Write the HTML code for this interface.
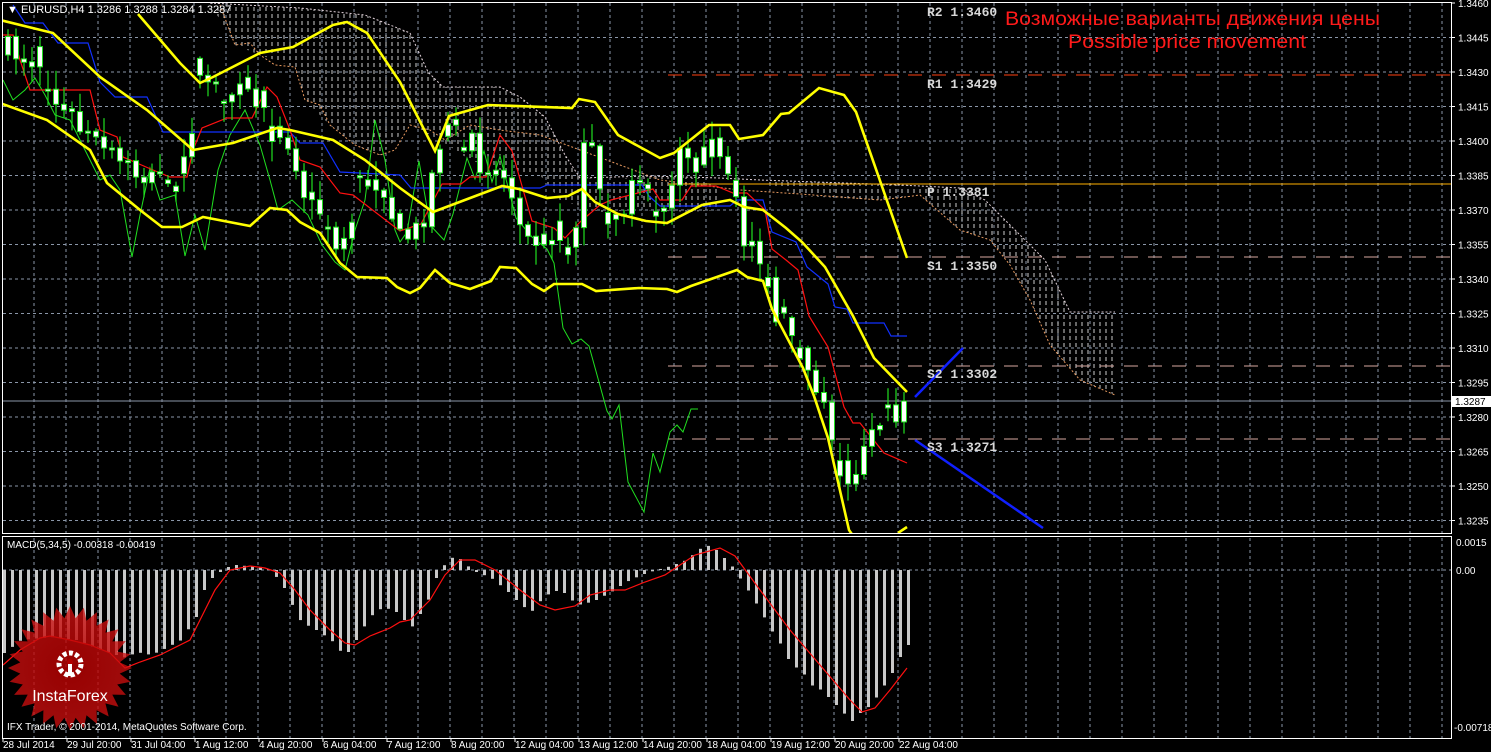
<!DOCTYPE html>
<html><head><meta charset="utf-8"><style>
html,body{margin:0;padding:0;background:#000;width:1491px;height:752px;overflow:hidden}
svg{display:block}
text{font-family:"Liberation Sans","DejaVu Sans",sans-serif}
text.m{font-family:"Liberation Mono","DejaVu Sans Mono",monospace}
</style></head><body>
<svg id="s" width="1491" height="752" viewBox="0 0 1491 752" xmlns="http://www.w3.org/2000/svg">
<defs>
<pattern id="cl" width="6" height="7" patternUnits="userSpaceOnUse"><line x1="2" y1="0" x2="2" y2="4" stroke="#f0f0f0" stroke-width="1"/></pattern>
<clipPath id="mc"><rect x="3" y="3" width="1448" height="530"/></clipPath>
<clipPath id="sc"><rect x="3" y="538" width="1448" height="200"/></clipPath>
<radialGradient id="rg" cx="50%" cy="50%" r="50%"><stop offset="0" stop-color="#b00000" stop-opacity="0.95"/><stop offset="1" stop-color="#d01010" stop-opacity="0.85"/></radialGradient>
</defs>
<rect width="1491" height="752" fill="#000"/>
<g id="grid" stroke="#8a96a8" stroke-width="1" stroke-dasharray="3,3"></g>
<g clip-path="url(#mc)">
<polygon fill="url(#cl)" opacity="0.85" points="210,3 300,8 365,15 410,33 428,72 443,87 500,87 520,97 545,117 565,155 580,178 610,180 650,176 700,178 720,190 720,210 690,212 640,210 600,212 560,200 540,175 500,170 470,160 440,140 410,125 380,155 355,145 330,125 305,100 295,67 260,55 235,45"/>
<polygon fill="url(#cl)" opacity="0.85" points="760,180 900,185 960,188 985,200 1020,235 1045,260 1070,312 1115,312 1115,395 1080,380 1050,345 1030,300 1010,265 990,240 960,230 920,195 880,200 800,196"/>
<polyline fill="none" stroke="#e89a60" stroke-width="1" stroke-dasharray="2,2" points="220,5 235,45 250,43 260,55 275,65 295,67 305,100 320,105 330,125 355,145 380,155 395,150 410,125 430,130 445,140 470,125 500,130 540,135 580,150 620,165 660,180 700,185 740,190 800,194 880,200 905,197 920,195 960,230 990,240 1010,265 1030,300 1050,345 1080,380 1115,395"/>
<polyline fill="none" stroke="#e0d0d8" stroke-width="1" stroke-dasharray="2,2" points="210,3 300,8 365,15 410,33 428,72 443,87 500,87 520,97 545,117 565,155 580,178 650,176 720,178 760,180 900,185 960,188 985,200 1020,235 1045,260 1070,312 1115,312"/>
<line x1="668" y1="75" x2="1451" y2="75" stroke="#ff4010" stroke-width="1" stroke-dasharray="14,10"/>
<line x1="668" y1="184" x2="1451" y2="184" stroke="#ffb000" stroke-width="1"/>
<line x1="668" y1="257" x2="1451" y2="257" stroke="#d8a8a0" stroke-width="1" stroke-dasharray="14,10"/>
<line x1="668" y1="366" x2="1451" y2="366" stroke="#d8a8a0" stroke-width="1" stroke-dasharray="14,10"/>
<line x1="668" y1="439" x2="1451" y2="439" stroke="#d8a8a0" stroke-width="1" stroke-dasharray="14,10"/>
<line x1="3" y1="401" x2="1451" y2="401" stroke="#8a96a8" stroke-width="1"/>
<polyline fill="none" stroke="#20e020" stroke-width="1" points="3,80 13,100 25,90 35,78 45,95 55,115 70,120 85,150 100,180 110,175 120,190 132,257 140,215 150,168 160,200 175,195 185,256 195,215 205,250 218,170 230,135 245,110 260,145 270,180 278,210 292,200 308,215 322,245 335,262 345,270 355,230 365,200 375,120 385,160 395,230 400,242 407,232 419,161 430,225 444,240 453,214 467,158 475,179 484,151 492,182 500,156 516,218 532,237 547,249 554,263 563,328 572,344 581,339 589,346 607,411 612,419 619,405 628,482 644,512 653,453 660,472 670,432 677,425 683,432 691,409 698,409"/>
<polyline fill="none" stroke="#1030ff" stroke-width="1.2" points="13,5 25,23 43,23 58,43 88,43 100,82 115,97 147,97 163,132 290,132 300,143 323,143 340,172 400,175 411,188 540,188 547,185 642,185 649,196 660,206 730,206 737,200 763,200 772,232 796,242 807,267 828,284 835,307 847,309 853,323 884,323 891,336 907,336"/>
<polyline fill="none" stroke="#ff1010" stroke-width="1.2" points="3,35 13,35 20,60 30,90 60,90 90,90 100,130 117,137 123,157 153,170 170,177 187,177 193,150 202,128 227,118 252,118 267,87 277,97 290,130 300,160 320,167 340,193 353,195 400,231 421,224 442,184 461,184 470,177 486,177 500,135 512,151 532,221 554,228 565,238 580,222 600,205 611,200 653,189 660,200 682,200 691,186 716,186 733,193 747,193 765,210 772,249 786,260 798,270 809,316 828,347 844,407 853,423 860,423 884,453 907,463"/>
<g id="candles"></g>
<g fill="none" stroke="#ffff00" stroke-width="2.6">
<polyline points="138,14 180,63 200,83 213,77 260,53 293,47 333,25 347,22 367,33 400,82 435,151 449,116 488,105 572,108 579,99 595,102 618,135 660,158 674,153 709,125 730,125 739,139 763,135 781,114 789,113 819,88 844,95 856,112 907,258"/>
<polyline points="0,20 53,33 100,77 147,110 193,150 233,143 277,128 290,130 333,140 365,160 400,188 433,212 502,186 519,189 547,198 568,196 582,189 595,202 618,214 646,221 667,223 702,205 730,200 744,207 763,210 786,228 802,242 825,267 853,316 874,358 907,392"/>
<polyline points="0,103 47,120 90,150 107,183 140,210 162,227 182,227 203,217 250,226 270,208 287,210 300,222 320,233 340,263 357,277 387,278 397,287 410,293 420,288 435,270 450,283 470,289 491,281 500,267 516,268 532,284 544,291 554,284 582,284 596,291 639,288 667,289 677,292 691,286 737,270 747,277 763,281 772,309 803,368 814,396 828,438 849,530 856,540"/>
<polyline points="898,533 907,527"/>
</g>
<line x1="915" y1="397" x2="963" y2="348" stroke="#1020ff" stroke-width="2.5"/>
<line x1="915" y1="440" x2="1043" y2="528" stroke="#1020ff" stroke-width="2.5"/>
<g font-size="13" font-weight="bold" fill="#d8d8d8">
<text class="m" x="927" y="16">R2 1.3460</text>
<text class="m" x="927" y="88">R1 1.3429</text>
<text class="m" x="927" y="196">P 1.3381</text>
<text class="m" x="927" y="270">S1 1.3350</text>
<text class="m" x="927" y="378">S2 1.3302</text>
<text class="m" x="927" y="451">S3 1.3271</text>
</g>
</g>
<text x="1005" y="25" fill="#ff1a1a" font-size="19" textLength="375" lengthAdjust="spacingAndGlyphs">Возможные варианты движения цены</text>
<text x="1068" y="48" fill="#ff1a1a" font-size="19" textLength="238" lengthAdjust="spacingAndGlyphs">Possible price movement</text>
<text x="7" y="13" fill="#fff" font-size="11">▼ EURUSD,H4  1.3286 1.3288 1.3284 1.3287</text>
<line x1="3" y1="570" x2="1451" y2="570" stroke="#8a96a8" stroke-dasharray="3,3"/>
<g id="hist" clip-path="url(#sc)"></g>
<g transform="translate(70,668)">
<polygon id="star" fill="url(#rg)" opacity="0.9"/>
<g fill="#fff" transform="translate(0,-4)">
<circle cx="0" cy="0" r="11" fill="none" stroke="#fff" stroke-width="5" stroke-dasharray="4,2.3"/>
<circle cx="0" cy="-2" r="3" fill="#b00000"/>
<rect x="-2" y="0" width="4" height="12" fill="#fff"/>
</g>
<text x="0" y="33" fill="#fff" font-size="16" text-anchor="middle">InstaForex</text>
</g>
<text x="7" y="730" fill="#fff" font-size="10">IFX Trader, © 2001-2014, MetaQuotes Software Corp.</text>
<text x="7" y="548" fill="#fff" font-size="10">MACD(5,34,5) -0.00318 -0.00419</text>
<g stroke="#fff" fill="none" stroke-width="1">
<rect x="2.5" y="2.5" width="1449" height="531"/>
<rect x="2.5" y="536.5" width="1449" height="202"/>
</g>
<rect x="1452" y="396" width="39" height="11" fill="#fff"/>
<text x="1455" y="405" font-size="10" fill="#000">1.3287</text>
<g id="axis" font-size="10" fill="#fff"></g>
<text x="1456" y="546" font-size="10" fill="#fff">0.0015</text>
<text x="1456" y="574" font-size="10" fill="#fff">0.00</text>
<text x="1454" y="731" font-size="10" fill="#fff">-0.00718</text>
<g id="time" font-size="10" fill="#fff"></g>
</svg>
<script>
var NS="http://www.w3.org/2000/svg";
function el(p,t,a,tx){var e=document.createElementNS(NS,t);for(var k in a)e.setAttribute(k,a[k]);if(tx)e.textContent=tx;p.appendChild(e);return e;}
var g=document.getElementById('grid');
for(var x=34;x<1451;x+=32){el(g,'line',{x1:x,y1:3,x2:x,y2:533});el(g,'line',{x1:x,y1:538,x2:x,y2:738});}
var ax=document.getElementById('axis');
for(var k=0;k<=15;k++){var y=3+34.5*k;if(k>0)el(g,'line',{x1:3,y1:y,x2:1451,y2:y});
el(ax,'line',{x1:1451,y1:y,x2:1455,y2:y,stroke:'#fff'});
if(y<395||y>410)el(ax,'text',{x:1458,y:y+4},(1.3460-0.0015*k).toFixed(4));}
var tl=["28 Jul 2014","29 Jul 20:00","31 Jul 04:00","1 Aug 12:00","4 Aug 20:00","6 Aug 04:00","7 Aug 12:00","8 Aug 20:00","12 Aug 04:00","13 Aug 12:00","14 Aug 20:00","18 Aug 04:00","19 Aug 12:00","20 Aug 20:00","22 Aug 04:00"];
var tg=document.getElementById('time');
for(var i=0;i<tl.length;i++){var x=3+64*i;el(tg,'text',{x:x,y:748},tl[i]);el(tg,'line',{x1:x,y1:739,x2:x,y2:742,stroke:'#fff'});}
function interp(pts,x){for(var i=0;i<pts.length-1;i++){if(x<=pts[i+1][0]){var a=pts[i],b=pts[i+1];return a[1]+(b[1]-a[1])*(x-a[0])/(b[0]-a[0]);}}return pts[pts.length-1][1];}
var seed=7;function rnd(){seed=(seed*16807)%2147483647;return seed/2147483647;}
var cp=[[3,55],[10,50],[40,60],[60,110],[100,150],[130,170],[150,180],[180,170],[200,90],[230,90],[260,100],[285,130],[300,190],[320,210],[345,250],[360,190],[380,180],[400,240],[420,230],[440,140],[460,130],[480,160],[500,170],[520,210],[540,240],[560,220],[575,250],[585,120],[600,200],[620,230],[635,160],[660,230],[680,160],[700,160],[715,150],[730,190],[745,240],[760,250],[775,320],[790,330],[805,340],[815,400],[830,420],[845,490],[855,470],[870,420],[885,415],[900,410],[907,401]];
var cg=document.getElementById('candles');var prev=55;
for(var x=8;x<=907;x+=8){var c=interp(cp,x)+(rnd()-0.5)*30;if(x>=900)c=401;var o=prev;if(rnd()<0.3)o=c+(rnd()-0.5)*40;
var t=Math.min(o,c),b=Math.max(o,c);if(b-t<2){b=t+2;}
var hi=t-rnd()*18-2,lo=b+rnd()*18+2;
el(cg,'line',{x1:x,y1:hi,x2:x,y2:lo,stroke:'#20e020','stroke-width':1.2});
el(cg,'rect',{x:x-2.5,y:t,width:5,height:b-t,fill:'#fff',stroke:'#20e020','stroke-width':1});prev=c;}
var hp=[[3,653],[20,640],[50,637],[75,640],[100,650],[115,655],[125,658],[135,652],[150,655],[165,648],[180,640],[195,617],[203,590],[211,578],[219,572],[227,567],[235,565],[245,566],[260,567],[270,570],[283,588],[290,603],[300,622],[315,630],[330,640],[340,652],[345,655],[355,640],[365,623],[375,610],[385,608],[395,612],[405,622],[410,628],[415,620],[425,605],[435,578],[445,562],[455,555],[465,565],[475,572],[490,578],[505,590],[520,605],[530,612],[540,600],[550,592],[560,590],[570,600],[580,605],[595,600],[610,592],[625,582],[640,575],[655,570],[670,566],[685,560],[700,548],[710,545],[720,555],[730,565],[740,580],[750,595],[760,612],[770,630],[780,645],[790,665],[800,670],[810,685],[820,690],[830,700],[840,710],[850,722],[860,712],[870,705],[880,690],[890,675],[900,655],[907,645]];
var hg=document.getElementById('hist');
for(var x=3;x<=907;x+=8){var v=interp(hp,x);el(hg,'rect',{x:x,y:Math.min(v,570),width:3,height:Math.max(1,Math.abs(v-570)),fill:'#c8c8c8'});}
el(hg,'polyline',{fill:'none',stroke:'#ff1010','stroke-width':1.2,points:"3,665 20,650 40,638 50,636 70,640 90,645 110,653 125,668 140,662 160,655 190,640 200,620 215,590 230,570 250,566 265,568 280,573 295,590 310,610 330,630 345,643 355,645 370,636 390,628 400,622 410,620 430,600 445,575 460,560 475,560 495,570 520,590 540,605 555,610 575,606 590,595 610,590 625,590 645,582 665,575 680,565 695,555 720,548 735,556 760,590 790,630 820,665 850,700 862,712 875,708 890,690 907,668"});
var pts=[];for(var i=0;i<56;i++){var a=i*Math.PI/28,r=(i%2)?50:62;pts.push((r*Math.cos(a)).toFixed(1)+','+(r*Math.sin(a)).toFixed(1));}
document.getElementById('star').setAttribute('points',pts.join(' '));
</script>
</body></html>
